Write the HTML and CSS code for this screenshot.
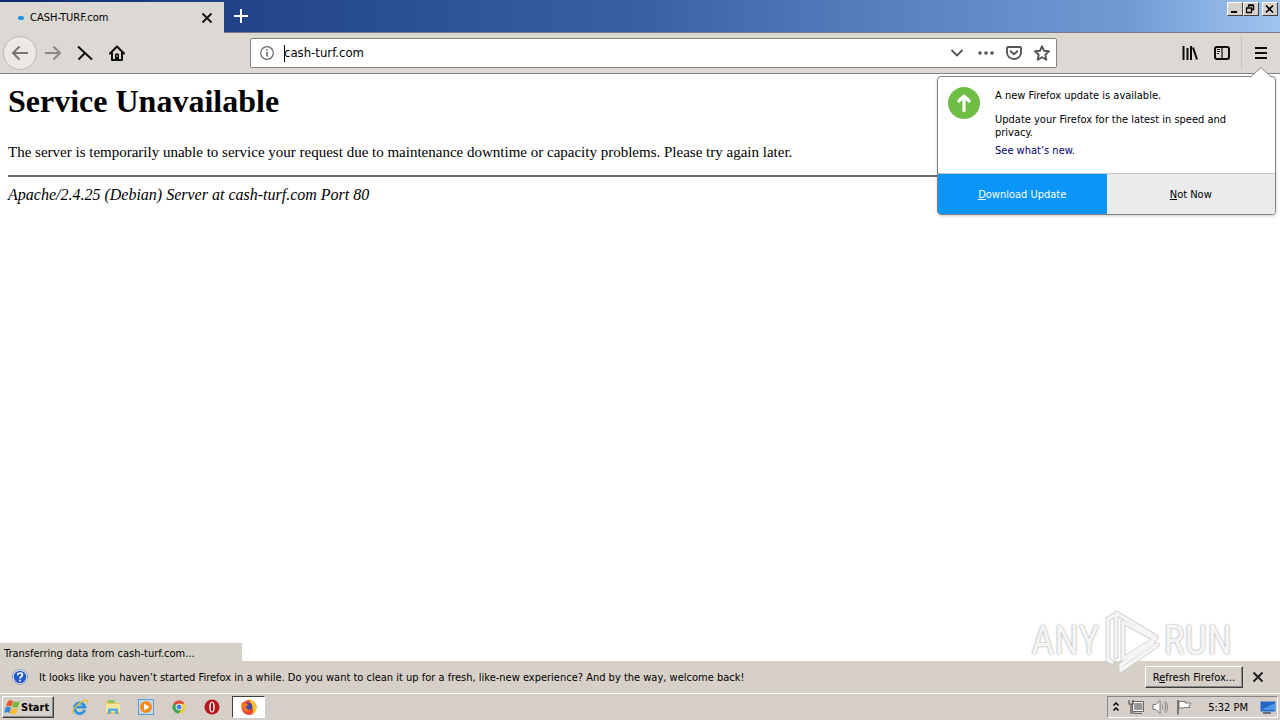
FILE: index.html
```html
<!DOCTYPE html>
<html lang="en">
<head>
<meta charset="utf-8">
<title>CASH-TURF.com</title>
<link rel="stylesheet" href="styles.css">
</head>
<body>
<div class="desktop">
  <header class="titlebar">
    <div class="tab">
      <span class="tab-dot"></span>
      <span class="tab-title">CASH-TURF.com</span>
      <button class="icon-btn tab-close" aria-label="Close tab"><svg width="12" height="12" viewBox="0 0 12 12"><path d="M1.500 1.500l9 9M10.500 1.500l-9 9" stroke="#111" stroke-width="1.800"/></svg></button>
    </div>
    <button class="icon-btn new-tab" aria-label="New tab"><svg width="14" height="14" viewBox="0 0 14 14"><path d="M7 0v14M0 7h14" stroke="#fff" stroke-width="2"/></svg></button>
    <div class="window-buttons">
      <button class="win-btn" aria-label="Minimize"><svg width="12" height="10" viewBox="0 0 12 10"><path d="M3 8h6" stroke="#000" stroke-width="2"/></svg></button>
      <button class="win-btn" aria-label="Restore"><svg width="12" height="10" viewBox="0 0 12 10"><path d="M4.500 3V1.500h5v4H8M4 1h6M2 4h6M2.500 4v4.500h5V4" fill="none" stroke="#000" stroke-width="1.300"/></svg></button>
      <button class="win-btn win-close" aria-label="Close"><svg width="12" height="10" viewBox="0 0 12 10"><path d="M3 1.500l7 7M10 1.500l-7 7" stroke="#000" stroke-width="1.600"/></svg></button>
    </div>
  </header>

  <nav class="toolbar">
    <div class="nav-buttons">
      <button class="icon-btn back" aria-label="Back"><svg width="18" height="16" viewBox="0 0 18 16"><path d="M17 8H2M8.500 1.500L2 8l6.500 6.500" fill="none" stroke="#777673" stroke-width="2"/></svg></button>
      <button class="icon-btn forward" aria-label="Forward"><svg width="18" height="16" viewBox="0 0 18 16"><path d="M1 8h15M9.500 1.500L16 8l-6.500 6.500" fill="none" stroke="#8b8985" stroke-width="2"/></svg></button>
      <button class="icon-btn stop" aria-label="Stop"><svg width="16" height="16" viewBox="0 0 16 16"><path d="M1 1.500l14 13M8 8l-6.500 6.500" stroke="#111" stroke-width="2"/></svg></button>
      <button class="icon-btn home" aria-label="Home"><svg width="16" height="16" viewBox="0 0 16 16"><path d="M1 8.500L8 1.500l7 7M3 8v7h10V8" fill="none" stroke="#0c0c0d" stroke-width="2" stroke-linejoin="round" stroke-linecap="round"/><path d="M6 15V9.500q0-1 1-1h2q1 0 1 1V15z" fill="#0c0c0d"/><path d="M8 10v2" stroke="#ddd"/></svg></button>
    </div>
    <div class="urlbar">
      <svg width="14" height="14" viewBox="0 0 14 14"><circle cx="7" cy="7" r="6.300" fill="none" stroke="#666" stroke-width="1.200"/><path d="M7 6v4.500M7 3.300v1.500" stroke="#666" stroke-width="1.600"/></svg>
      <span class="caret"></span>
      <input class="url-input" type="text" value="cash-turf.com" aria-label="Address">
      <button class="icon-btn" aria-label="History"><svg width="16" height="14" viewBox="0 0 16 14"><path d="M1.500 4L7 9.500 12.500 4" fill="none" stroke="#555" stroke-width="1.800"/></svg></button>
      <button class="icon-btn" aria-label="Page actions"><svg width="16" height="16" viewBox="0 0 16 16"><g fill="#555"><circle cx="2" cy="8" r="1.800"/><circle cx="8" cy="8" r="1.800"/><circle cx="14" cy="8" r="1.800"/></g></svg></button>
      <button class="icon-btn" aria-label="Pocket"><svg width="16" height="16" viewBox="0 0 16 16"><path d="M2 2h12q1 0 1 1v4.500a7 6.500 0 0 1-14 0V3q0-1 1-1zM4.700 6.200L8 9.300l3.300-3.100" fill="none" stroke="#555" stroke-width="1.900" stroke-linecap="round" stroke-linejoin="round"/></svg></button>
      <button class="icon-btn" aria-label="Bookmark"><svg width="16" height="16" viewBox="0 0 16 16"><path d="M8 1.200l2 4.600 5 .5-3.700 3.400 1 5L8 12.200l-4.300 2.500 1-5L1 6.300l5-.5z" fill="none" stroke="#555" stroke-width="1.900" stroke-linejoin="round"/></svg></button>
    </div>
    <div class="tools">
      <button class="icon-btn" aria-label="Library"><svg width="16" height="16" viewBox="0 0 16 16"><path d="M1.500 1v14M5.500 3v12M9 1v14M11 2.500l4 12" stroke="#0c0c0d" stroke-width="2"/></svg></button>
      <button class="icon-btn" aria-label="Sidebar"><svg width="16" height="16" viewBox="0 0 16 16"><rect x="1" y="2" width="14" height="12" rx="2" fill="none" stroke="#0c0c0d" stroke-width="2"/><path d="M8 2v12M3 4.500h3M3 6.500h3M3 8.500h2" stroke="#0c0c0d" stroke-width="1.200"/></svg></button>
      <div class="menu-wrap">
        <button class="icon-btn" aria-label="Menu"><svg width="12" height="14" viewBox="0 0 12 14"><path d="M0 2h12M0 7h12M0 12h12" stroke="#0c0c0d" stroke-width="2"/></svg></button>
        <section class="popup">
          <svg class="popup-arrow" width="20" height="10" viewBox="0 0 20 10"><path d="M0 10L10 .7 20 10z" fill="#fff"/><path d="M0 9.500L10 .7l10 8.800" fill="none" stroke="#888"/></svg>
          <div class="popup-body">
            <svg width="32" height="32" viewBox="0 0 32 32"><circle cx="16" cy="16" r="16" fill="#6fbe44"/><path d="M16 23.500V10M10.800 14L16 9l5.200 5" fill="none" stroke="#fff" stroke-width="3.200" stroke-linecap="round" stroke-linejoin="round"/></svg>
            <div class="popup-text">
              <p class="popup-title">A new Firefox update is available.</p>
              <p>Update your Firefox for the latest in speed and privacy.</p>
              <a class="popup-link" href="#">See what’s new.</a>
            </div>
          </div>
          <div class="popup-actions">
            <button class="primary"><u>D</u>ownload Update</button>
            <button class="secondary"><u>N</u>ot Now</button>
          </div>
        </section>
      </div>
    </div>
  </nav>

  <main class="page">
    <h1>Service Unavailable</h1>
    <p>The server is temporarily unable to service your request due to maintenance downtime or capacity problems. Please try again later.</p>
    <hr>
    <address>Apache/2.4.25 (Debian) Server at cash-turf.com Port 80</address>
    <div class="status">Transferring data from cash-turf.com...</div>
    <div class="watermark">
      <span>ANY</span>
      <svg width="58" height="64" viewBox="0 0 58 64"><g fill="none" stroke-linejoin="round" stroke-linecap="round"><path id="mark" d="M10 7L5 10v41l4 2M13 48V4l40 24M20 13v37l32-20zM18 61l36-25M18 61v-5l32-22" stroke="#c9c9c9" stroke-width="5"/><path d="M10 7L5 10v41l4 2M13 48V4l40 24M20 13v37l32-20zM18 61l36-25M18 61v-5l32-22" stroke="#f5f5f5" stroke-width="3.400"/></g></svg>
      <span>RUN</span>
    </div>
  </main>

  <aside class="notice">
    <svg width="16" height="16" viewBox="0 0 16 16"><circle cx="8" cy="8" r="7.500" fill="#fff" stroke="#8b9cc0"/><circle cx="8" cy="8" r="6.300" fill="#2459cc"/><path d="M5.700 6.300q0-2.300 2.400-2.300t2.300 2q0 1-1.200 1.700T8 9.500M8 10.700v1.800" fill="none" stroke="#fff" stroke-width="1.700"/></svg>
    <span class="notice-text">It looks like you haven’t started Firefox in a while. Do you want to clean it up for a fresh, like-new experience? And by the way, welcome back!</span>
    <button class="classic refresh">R<u>e</u>fresh Firefox...</button>
    <button class="icon-btn" aria-label="Dismiss"><svg width="12" height="12" viewBox="0 0 12 12"><path d="M1.500 1.500l9 9M10.500 1.500l-9 9" stroke="#222" stroke-width="2"/></svg></button>
  </aside>

  <footer class="taskbar">
    <button class="classic start"><svg width="16" height="16" viewBox="0 0 16 16"><path d="M4 2q2.500-1.500 5 0L7.300 7.500Q5 6 2 7.300z" fill="#e8562a"/><path d="M9.800 2.300q2.500 1.500 6 0L14 8q-3 1.300-6-.2z" fill="#76b83a"/><path d="M1.500 8.300q3-1.200 5.500.3L5.500 14q-2.500-1.300-5.300-.2z" fill="#3b82d6"/><path d="M7.800 9q3 1.500 6 .3L12 14.700q-3 1-6-.5z" fill="#f6bd27"/></svg>Start</button>
    <div class="launchers">
      <button class="icon-btn" aria-label="Internet Explorer"><svg width="18" height="18" viewBox="0 0 18 18"><path d="M13.800 12A5.300 5.300 0 1 1 14 9.200H5" fill="none" stroke="#2b94dc" stroke-width="2.800"/><path d="M2 16Q0 14 5 8.500T15.500 2q2 .5.500 3.500" fill="none" stroke="#e8bd3c" stroke-width="1.300"/></svg></button>
      <button class="icon-btn" aria-label="Explorer"><svg width="18" height="18" viewBox="0 0 18 18"><path d="M2 3h6l1 2h7v11H2z" fill="#eec65e"/><path d="M4 2h7v3H4z" fill="#8ec66a"/><path d="M2 6h14v8H2z" fill="#f9e59c"/><path d="M4 16v-5.500h10V16h-3v-3H7v3z" fill="#58aee0"/></svg></button>
      <button class="icon-btn" aria-label="Media Player"><svg width="18" height="18" viewBox="0 0 18 18"><rect x="1.500" y="1.500" width="15" height="15" fill="#bddcf2" stroke="#5b9bd0"/><circle cx="9" cy="9" r="6" fill="#f48b1c"/><path d="M7 5.500v7L12.500 9z" fill="#fff"/></svg></button>
      <button class="icon-btn" aria-label="Chrome"><svg width="18" height="18" viewBox="0 0 18 18"><circle cx="9" cy="9" r="6.500" fill="#f6c934"/><path d="M9 9L3.400 5.700A6.500 6.500 0 0 1 14.600 5.700H9z" fill="#df4b3b"/><path d="M9 9L3.400 5.700A6.500 6.500 0 0 0 8.500 15.500l3.500-5z" fill="#3ba55a"/><circle cx="9" cy="9" r="3.300" fill="#fff"/><circle cx="9" cy="9" r="2.500" fill="#4480d8"/></svg></button>
      <button class="icon-btn" aria-label="Opera"><svg width="18" height="18" viewBox="0 0 18 18"><circle cx="9" cy="9" r="7.500" fill="#b8181d"/><ellipse cx="9" cy="9" rx="2.800" ry="5.500" fill="#f4f4f4"/><ellipse cx="9" cy="9" rx="1.200" ry="4.600" fill="#921014"/></svg></button>
      <button class="icon-btn running" aria-label="Firefox"><svg width="18" height="18" viewBox="0 0 18 18"><circle cx="9" cy="9.500" r="7.500" fill="#f3443a"/><path d="M9 1q6 1.500 7.300 7 .7 6-4.300 8.500 2-4 0-8T9 1z" fill="#ffc425"/><circle cx="8.500" cy="8.500" r="3.800" fill="#3c47a8"/><path d="M2 4q2 1 4 1l3 2.500q-3 0-3 2 1 3 5 2-3 4-7 1-4-4-2-8.500z" fill="#f8761f"/></svg></button>
    </div>
    <div class="tray">
      <svg width="8" height="12" viewBox="0 0 8 12"><path d="M1.500 4.500l2.500-2.500 2.500 2.500M1.500 9.500L4 7l2.500 2.500" fill="none" stroke="#000" stroke-width="1.500"/></svg>
      <svg width="16" height="16" viewBox="0 0 16 16"><rect x="5.500" y="3.500" width="9.500" height="8" fill="#999" stroke="#fff"/><path d="M4.500 2.500h11v10h-11zM7 14.500h7" fill="none" stroke="#666"/><path d="M1 1v4h4V1M3 5v9h4" fill="none" stroke="#555" stroke-width="1.200"/></svg>
      <svg width="16" height="16" viewBox="0 0 16 16"><path d="M1 5.500h3l4-4v13l-4-4H1z" fill="#fff" stroke="#777"/><path d="M10 5.500q2 2.500 0 5M12 3.500q3.500 4.500 0 9M13.500 2q4 6 0 12" fill="none" stroke="#888"/></svg>
      <svg width="16" height="16" viewBox="0 0 16 16"><path d="M2 1v14.500" stroke="#777" stroke-width="2"/><path d="M3 2.500h6V4h6l-2 3 1 1.500H8V9H3z" fill="#fff" stroke="#777"/></svg>
      <time class="clock">5:32 PM</time>
      <svg width="16" height="14" viewBox="0 0 16 14"><rect x=".5" y="1.500" width="15" height="10" rx="1" fill="#2466c4" stroke="#7a9cc8"/><path d="M1 10L15 3v7z" fill="#4c97e4"/><path d="M3 13h8" stroke="#456" stroke-width="1.500"/></svg>
    </div>
  </footer>
</div>
</body>
</html>
```
FILE: styles.css
```css
* { box-sizing: border-box; }
body {
  margin: 0;
  font: 11px/13px "DejaVu Sans Condensed", "DejaVu Sans", sans-serif;
  color: #000;
}
button, input { font: inherit; color: inherit; }
svg { display: block; flex: none; }
p { margin: 0; }
.desktop { display: flex; flex-direction: column; height: 100vh; overflow: hidden; }
.icon-btn { display: flex; align-items: center; justify-content: center; flex: none; padding: 0; border: 0; background: none; }

.titlebar { display: flex; height: 33px; padding-top: 2px; background: linear-gradient(90deg, #0e2a70, #22458c 20%, #3a60a3 50%, #5c84c2 72%, #7199d3 88%, #a0c6f0); border-bottom: 1px solid #777d8a; }
.tab { display: flex; align-items: center; width: 224px; height: 31px; padding: 0 11px 0 18px; background: #dcd8d3; }
.tab-dot { width: 6px; height: 4px; border-radius: 3px; background: #1c92e6; }
.tab-title { flex: 1; margin-left: 6px; }
.new-tab { width: 33px; height: 28px; }
.window-buttons { display: flex; height: 14px; margin-left: auto; padding-right: 2px; }
.win-btn { width: 16px; height: 14px; padding: 0; background: #d6d2cb; border: 1px solid; border-color: #fff #404040 #404040 #fff; }
.win-close { margin-left: 3px; }

.toolbar { position: relative; z-index: 2; display: flex; align-items: center; height: 41px; background: #dcd8d3; border-bottom: 1px solid #85827e; }
.nav-buttons { display: flex; align-items: center; width: 250px; padding-left: 3px; }
.nav-buttons .icon-btn { width: 32px; height: 32px; }
.nav-buttons .back { width: 34px; height: 34px; border: 1px solid #bdb9b4; border-radius: 50%; background: #ebe8e5; }
.urlbar { display: flex; flex: 1; align-items: center; gap: 12px; height: 30px; padding: 0 6px 0 9px; background: #fff; border: 1px solid #85827e; border-radius: 2px; }
.caret { width: 1px; height: 17px; margin: 0 -13px 0 -2px; background: #000; }
.url-input { flex: 1; min-width: 0; padding: 0; border: 0; outline: 0; background: none; font-size: 13px; line-height: 18px; }
.tools { display: flex; align-items: center; justify-content: flex-end; gap: 16px; width: 223px; height: 100%; }
.menu-wrap { position: relative; display: flex; height: 34px; margin-left: -5px; padding: 0 13px; border-left: 1px solid #c6c2bd; }

.popup { position: absolute; top: 40px; right: 4px; width: 339px; background: #fff; border: 1px solid #85827e; border-radius: 4px; box-shadow: 0 1px 3px #0003; }
.popup-arrow { position: absolute; top: -10px; right: 4px; }
.popup-body { display: flex; gap: 15px; height: 96px; padding: 10px 40px 0 10px; }
.popup-text { padding-top: 2px; }
.popup-title { margin-bottom: 11px; }
.popup-link { display: block; margin-top: 5px; color: #00006e; text-decoration: none; }
.popup-actions { display: grid; grid-template-columns: 1fr 1fr; height: 41px; border-top: 1px solid #c8c8c8; }
.popup-actions button { border: 0; padding: 0; }
.primary { background: #0996f8; color: #fff; border-radius: 0 0 0 3px; }
.secondary { background: #ebebeb; border-radius: 0 0 3px 0; }

.page { position: relative; flex: 1; padding: 9px 8px; background: #fff; font: 16px/20px "Liberation Serif", serif; }
.page h1 { margin: 0 0 22px; font-size: 32px; line-height: 37px; }
.page p { font-size: 15px; }
.page hr { margin: 13px 0 8px; border: 1px solid #666; }
.status { position: absolute; left: 0; bottom: 0; width: 242px; height: 18px; padding: 4px 4px 0; background: #d5d1c9; font: 11px/13px "DejaVu Sans Condensed", "DejaVu Sans", sans-serif; }
.watermark { position: absolute; right: 48px; bottom: -12px; display: flex; align-items: center; gap: 3px; color: #f5f5f5; font: 40px/64px "Liberation Sans Narrow", "Roboto Condensed", "Open Sans Condensed", "Liberation Sans", sans-serif; text-shadow: 0 0 2px #888; }

.notice { display: flex; align-items: center; height: 32px; padding: 0 16px 0 12px; background: #d6d0c8; }
.notice-text { flex: 1; margin-left: 11px; white-space: nowrap; }
.classic { background: #d6d0c8; border: 1px solid; border-color: #fff #404040 #404040 #fff; box-shadow: inset -1px -1px #888; }
.refresh { width: 98px; height: 22px; margin-right: 9px; padding: 0; }
.taskbar { display: flex; align-items: center; height: 27px; padding: 0 2px; background: #d6cec8; border-top: 1px solid #fff; }
.start { display: flex; align-items: center; gap: 1px; width: 52px; height: 22px; padding: 0 1px; font-weight: bold; }
.launchers { display: flex; align-items: center; margin-left: 9px; }
.launchers .icon-btn { width: 33px; height: 22px; }
.launchers .running { background: #fff; border: 1px solid; border-color: #404040 #fff #fff #404040; margin-left: 4px; }
.tray { display: flex; align-items: center; gap: 8px; height: 22px; margin-left: auto; padding: 0 1px 0 4px; border: 1px solid; border-color: #888 #fff #fff #888; }
.clock { margin: 0 4px 0 8px; }
```
